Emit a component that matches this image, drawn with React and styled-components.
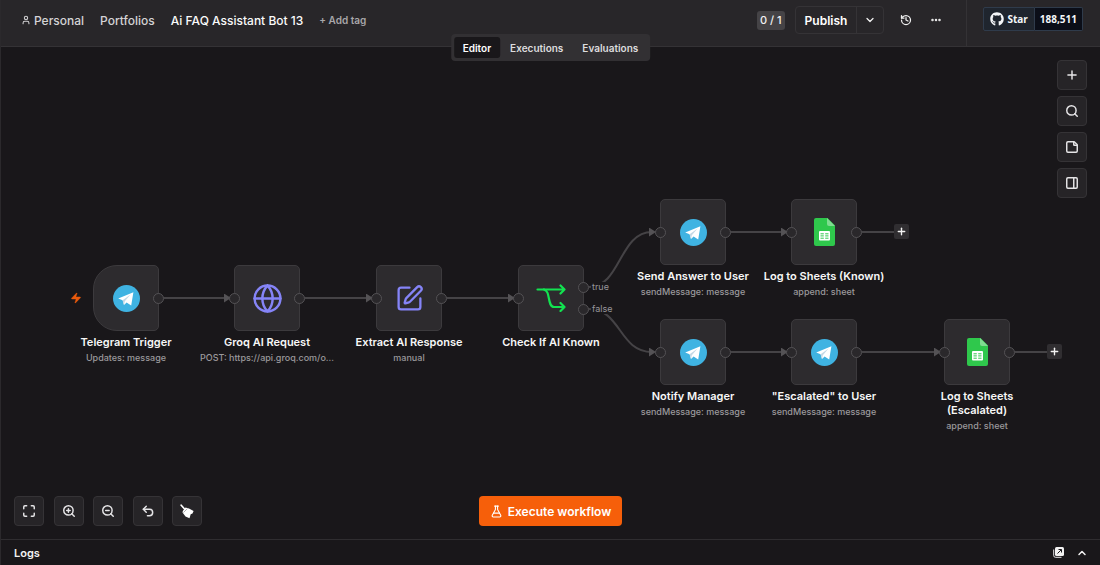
import React from "react";
import styled, { createGlobalStyle, css } from "styled-components";
import {
  ChevronDown,
  ChevronUp,
  Ellipsis,
  FlaskConical,
  Globe,
  History,
  Maximize,
  PanelRight,
  Plus,
  Search,
  SquarePen,
  StickyNote,
  Undo2,
  User,
  Zap,
  ZoomIn,
  ZoomOut,
} from "lucide-react";
import { FaGithub } from "react-icons/fa";

const GlobalStyle = createGlobalStyle`
  * {
    box-sizing: border-box;
  }

  body {
    margin: 0;
    background: #19171a;
    color: #f2f2f2;
    font-family: Inter, "Liberation Sans", sans-serif;
    font-size: 12px;
  }

  button {
    font-family: inherit;
    color: inherit;
    padding: 0;
    border: 0;
    background: none;
    cursor: pointer;
  }

  a {
    color: inherit;
    text-decoration: none;
  }

  svg {
    display: block;
    flex-shrink: 0;
  }
`;

const Page = styled.div`
  display: flex;
  flex-direction: column;
  min-height: 100vh;
  border-left: 1px solid #2b292c;
`;

const Header = styled.header`
  position: relative;
  display: flex;
  align-items: stretch;
  height: 47px;
  background: #282629;
  border-bottom: 1px solid #343235;
`;

const Breadcrumbs = styled.nav`
  display: flex;
  flex: 1;
  align-items: center;
  gap: 16px;
  padding: 0 0 6px 20px;
  font-weight: 500;
  color: #d4d3d5;
`;

const Crumb = styled.a`
  display: flex;
  align-items: center;
  gap: 3px;
`;

const Title = styled.h1`
  margin: 0;
  font-size: 12px;
  font-weight: 500;
  color: #fafafa;
`;

const AddTag = styled.button`
  font-size: 10px;
  font-weight: 600;
  color: #a8a7a9;
`;

const Actions = styled.div`
  display: flex;
  align-items: center;
  padding: 0 12px 6px 0;
`;

const Count = styled.span`
  padding: 0 3px;
  margin-right: 10px;
  border-radius: 3px;
  background: #454346;
  font-size: 11px;
  font-weight: 500;
  line-height: 19px;
`;

const PublishGroup = styled.div`
  display: flex;
  height: 28px;
  margin-right: 10px;
  border: 1px solid #353336;
  border-radius: 4px;
`;

const PublishButton = styled.button`
  padding: 0 9px;
  font-size: 12px;
  font-weight: 600;
  color: #fff;
`;

const PublishMore = styled.button`
  display: grid;
  place-items: center;
  width: 27px;
  border-left: 1px solid #353336;
`;

const HeaderIcon = styled.button`
  display: grid;
  place-items: center;
  width: 24px;
  height: 24px;
  margin-right: 6px;
`;

const GithubBox = styled.div`
  display: flex;
  align-items: center;
  padding: 0 17px 8px 16px;
  border-left: 1px solid #343235;
`;

const GithubButton = styled.a`
  display: flex;
  align-items: center;
  gap: 3px;
  height: 24px;
  padding: 0 ${(p) => (p.$count ? "5px" : "6px")};
  border: 1px solid #2f3b4b;
  border-radius: ${(p) => (p.$count ? "0 2px 2px 0" : "2px 0 0 2px")};
  border-left-width: ${(p) => (p.$count ? "0" : "1px")};
  background: ${(p) => (p.$count ? "#0b0e18" : "#1f252e")};
  font-family: "Open Sans", "Noto Sans", sans-serif;
  font-size: 10px;
  font-weight: 700;
  color: #f4f6f8;
`;

const Tabs = styled.div`
  position: absolute;
  top: 34px;
  left: 50%;
  z-index: 2;
  display: flex;
  gap: 1px;
  padding: 3px;
  border-radius: 4px;
  background: #323033;
  transform: translateX(-50%);
`;

const Tab = styled.button`
  height: 21px;
  padding: 0 9px;
  border-radius: 3px;
  background: ${(p) => (p.$active ? "#19171a" : "transparent")};
  font-size: 10px;
  font-weight: 600;
  color: ${(p) => (p.$active ? "#fff" : "#dddcde")};
`;

const Canvas = styled.main`
  position: relative;
  display: flex;
  flex: 1;
  flex-direction: column;
  align-items: stretch;
  justify-content: space-between;
  min-height: 440px;
  padding: 13px;
`;

const SideTools = styled.div`
  display: flex;
  flex-direction: column;
  align-self: flex-end;
  gap: 6px;
`;

const BottomBar = styled.div`
  display: grid;
  grid-template-columns: 1fr auto 1fr;
  align-items: center;
`;

const ZoomTools = styled.div`
  display: flex;
  justify-content: space-between;
  width: 188px;
`;

const ToolButton = styled.button`
  display: grid;
  place-items: center;
  width: 30px;
  height: 30px;
  border: 1px solid #353336;
  border-radius: 4px;
  background: #262427;
  color: #e6e5e7;
`;

const ExecuteButton = styled.button`
  display: flex;
  align-items: center;
  gap: 5px;
  height: 30px;
  padding: 0 11px;
  border-radius: 4px;
  background: #f65f0a;
  font-size: 12px;
  font-weight: 600;
  color: #fff;
`;

const Wires = styled.svg`
  position: absolute;
  top: 0;
  left: 0;
  width: 100%;
  height: 100%;
  pointer-events: none;
`;

const NodeRoot = styled.div`
  position: absolute;
  display: flex;
  flex-direction: column;
  align-items: center;
  width: 66px;
`;

const NodeBox = styled.div`
  position: relative;
  display: grid;
  place-items: center;
  width: 66px;
  height: 66px;
  border: 1px solid #3c3a3d;
  border-radius: ${(p) => (p.$trigger ? "24px 5px 5px 24px" : "5px")};
  background: #2d2b2e;
`;

const Bolt = styled.span`
  position: absolute;
  top: 26px;
  left: -24px;
`;

const Handle = styled.span`
  position: absolute;
  top: ${(p) => p.$top || 27}px;
  ${(p) =>
    p.$side === "in"
      ? css`
          left: -6px;
        `
      : css`
          right: -6px;
        `}
  width: 11px;
  height: 11px;
  border: 1px solid #545255;
  border-radius: 50%;
  background: #2a282b;
`;

const NodeLabel = styled.div`
  display: flex;
  flex-direction: column;
  align-items: center;
  gap: 3px;
  width: 134px;
  margin-top: 4px;
  text-align: center;
`;

const NodeName = styled.div`
  font-size: 11px;
  font-weight: 600;
  line-height: 14px;
  color: #f7f7f7;
`;

const NodeNote = styled.div`
  font-size: 9px;
  font-weight: 500;
  line-height: 12px;
  color: #9b999c;
  white-space: nowrap;
`;

const BranchLabel = styled.span`
  position: absolute;
  padding: 0 1px;
  background: #19171a;
  font-size: 9px;
  line-height: 10px;
  color: #98969a;
`;

const AddNode = styled.button`
  position: absolute;
  display: grid;
  place-items: center;
  width: 15px;
  height: 15px;
  border-radius: 2px;
  background: #302e31;
`;

const LogsBar = styled.footer`
  display: flex;
  align-items: center;
  justify-content: space-between;
  height: 26px;
  padding: 0 12px 0 13px;
  border-top: 1px solid #2f2d30;
`;

const LogsTitle = styled.h2`
  margin: 0;
  font-size: 11px;
  font-weight: 600;
`;

const LogsActions = styled.div`
  display: flex;
  align-items: center;
  gap: 12px;
`;

function TelegramIcon() {
  return (
    <svg width="27" height="27" viewBox="0 0 27 27">
      <circle cx="13.5" cy="13.5" r="13.5" fill="#3fb3e2" />
      <path d="M5.2 13.4 20.4 7.2 18.200 20.600 13.600 17.400 11 20 9.600 15.200z" fill="#fff" />
      <path d="M9.600 15.200 17.600 9.600 11.800 16.200 11 20z" fill="#c5d9e6" />
    </svg>
  );
}

function SheetsIcon() {
  return (
    <svg width="21" height="28" viewBox="0 0 21 28">
      <path
        d="M2 0h11.500L21 7.500V26a2 2 0 0 1-2 2H2a2 2 0 0 1-2-2V2a2 2 0 0 1 2-2z"
        fill="#2fc84c"
      />
      <path d="M13 0 21 8h-6a2 2 0 0 1-2-2z" fill="#7fdc90" />
      <rect x="5" y="13" width="11" height="9.500" rx="1" fill="#fff" />
      <path
        d="M6.500 15.800h3.300M11.200 15.800h3.300M6.500 17.900h3.300M11.200 17.900h3.300M6.500 20.200h3.300M11.200 20.200h3.300"
        stroke="#2fc84c"
        strokeWidth="1"
      />
    </svg>
  );
}

function BranchIcon() {
  return (
    <svg
      width="30"
      height="28"
      viewBox="0 0 30 28"
      fill="none"
      stroke="#12e350"
      strokeWidth="2.200"
      strokeLinecap="round"
      strokeLinejoin="round"
    >
      <path d="M1.500 5.500h27M24.500 1.500l4 4-4 4" />
      <path d="M8 5.500c3.500 1.500 4 4 4.800 8.500s1.700 9 5.200 9h10.500M24.500 19l4 4-4 4" />
    </svg>
  );
}

function BroomIcon() {
  return (
    <svg width="14" height="15" viewBox="0 0 14 15" fill="#fff">
      <path d="M1.200 1.200 4.800 5.200" stroke="#fff" strokeWidth="1.700" strokeLinecap="round" />
      <path d="M5.500 3.500 9 4.500 13.600 7 12.500 9.600 10.700 10.300 9.500 14.300 5.500 12.500 2.500 8.500 2.800 7z" />
      <path d="M3.400 8.600 7.400 4.600" stroke="#777579" strokeWidth=".6" />
    </svg>
  );
}

function PopOutIcon() {
  return (
    <svg width="11" height="11" viewBox="0 0 11 11" fill="none">
      <path d="M.7 2.500v6A1.800 1.800 0 0 0 2.500 10.300h6" stroke="#e6e5e7" />
      <rect x="2" y="0" width="9" height="9" rx="1.500" fill="#f2f2f2" />
      <path d="M4.500 6.500 8.300 2.700M5.500 2.500h3v3" stroke="#19171a" />
    </svg>
  );
}

const icons = {
  telegram: <TelegramIcon />,
  sheets: <SheetsIcon />,
  branch: <BranchIcon />,
  globe: <Globe size={31} strokeWidth={1.9} color="#8584f7" />,
  pen: <SquarePen size={29} strokeWidth={1.9} color="#8584f7" />,
};

// positions are in canvas coordinates
const nodes = [
  { x: 92, y: 218, icon: "telegram", name: "Telegram Trigger", note: "Updates: message", trigger: true },
  { x: 233, y: 218, icon: "globe", name: "Groq AI Request", note: "POST: https://api.groq.com/o..." },
  { x: 375, y: 218, icon: "pen", name: "Extract AI Response", note: "manual" },
  { x: 517, y: 218, icon: "branch", name: "Check If AI Known", outputs: [16, 38] },
  { x: 659, y: 152, icon: "telegram", name: "Send Answer to User", note: "sendMessage: message" },
  { x: 790, y: 152, icon: "sheets", name: "Log to Sheets (Known)", note: "append: sheet" },
  { x: 659, y: 272, icon: "telegram", name: "Notify Manager", note: "sendMessage: message" },
  { x: 790, y: 272, icon: "telegram", name: '"Escalated" to User', note: "sendMessage: message" },
  { x: 943, y: 272, icon: "sheets", name: "Log to Sheets (Escalated)", note: "append: sheet" },
];

const wires = [
  "M163 251H226",
  "M304 251H368",
  "M446 251H510",
  "M588 240C620 240 618 185 651 185",
  "M588 262C620 262 618 305 651 305",
  "M730 185H783",
  "M730 305H783",
  "M861 305H936",
];

const stubs = [
  { x: 893, y: 177, wire: "M861 185H893" },
  { x: 1046, y: 297, wire: "M1014 305H1046" },
];

function Node({ x, y, icon, name, note, trigger, outputs = [27] }) {
  return (
    <NodeRoot style={{ left: x, top: y }}>
      <NodeBox $trigger={trigger}>
        {trigger ? (
          <Bolt>
            <Zap size={12} fill="#ea5a0c" color="#ea5a0c" strokeWidth={1} />
          </Bolt>
        ) : (
          <Handle $side="in" />
        )}
        {icons[icon]}
        {outputs.map((top) => (
          <Handle key={top} $side="out" $top={top} />
        ))}
      </NodeBox>
      <NodeLabel>
        <NodeName>{name}</NodeName>
        {note && <NodeNote>{note}</NodeNote>}
      </NodeLabel>
    </NodeRoot>
  );
}

export default function App() {
  return (
    <Page>
      <GlobalStyle />
      <Header>
        <Breadcrumbs>
          <Crumb href="#personal">
            <User size={10} strokeWidth={2.5} />
            Personal
          </Crumb>
          <Crumb href="#portfolios">Portfolios</Crumb>
          <Title>Ai FAQ Assistant Bot 13</Title>
          <AddTag>+ Add tag</AddTag>
        </Breadcrumbs>
        <Actions>
          <Count>0 / 1</Count>
          <PublishGroup>
            <PublishButton>Publish</PublishButton>
            <PublishMore aria-label="Publish options">
              <ChevronDown size={12} strokeWidth={2.5} />
            </PublishMore>
          </PublishGroup>
          <HeaderIcon aria-label="History">
            <History size={12} strokeWidth={2.5} />
          </HeaderIcon>
          <HeaderIcon aria-label="More">
            <Ellipsis size={12} strokeWidth={3} />
          </HeaderIcon>
        </Actions>
        <GithubBox>
          <GithubButton href="#star">
            <FaGithub size={14} />
            Star
          </GithubButton>
          <GithubButton href="#stargazers" $count>
            188,511
          </GithubButton>
        </GithubBox>
        <Tabs role="tablist">
          <Tab role="tab" $active>
            Editor
          </Tab>
          <Tab role="tab">Executions</Tab>
          <Tab role="tab">Evaluations</Tab>
        </Tabs>
      </Header>

      <Canvas>
        <Wires fill="none" stroke="#454346" strokeWidth="2">
          <defs>
            <marker
              id="arrow"
              viewBox="0 0 7 9"
              refX="3"
              refY="4.5"
              markerWidth="7"
              markerHeight="9"
              markerUnits="userSpaceOnUse"
            >
              <path d="M0 0 7 4.500 0 9z" fill="#545255" stroke="none" />
            </marker>
          </defs>
          {wires.map((d) => (
            <path key={d} d={d} markerEnd="url(#arrow)" />
          ))}
          {stubs.map((stub) => (
            <path key={stub.wire} d={stub.wire} />
          ))}
        </Wires>
        {nodes.map((node) => (
          <Node key={node.name} {...node} />
        ))}
        <BranchLabel style={{ left: 590, top: 235 }}>true</BranchLabel>
        <BranchLabel style={{ left: 590, top: 257 }}>false</BranchLabel>
        {stubs.map((stub) => (
          <AddNode key={stub.x} aria-label="Add node" style={{ left: stub.x, top: stub.y }}>
            <Plus size={11} strokeWidth={3} />
          </AddNode>
        ))}

        <SideTools>
          <ToolButton aria-label="Add">
            <Plus size={14} strokeWidth={2.5} />
          </ToolButton>
          <ToolButton aria-label="Search">
            <Search size={14} strokeWidth={2.5} />
          </ToolButton>
          <ToolButton aria-label="Sticky note">
            <StickyNote size={14} strokeWidth={2.5} />
          </ToolButton>
          <ToolButton aria-label="Side panel">
            <PanelRight size={14} strokeWidth={2.5} />
          </ToolButton>
        </SideTools>

        <BottomBar>
          <ZoomTools>
            <ToolButton aria-label="Fit view">
              <Maximize size={14} strokeWidth={2.5} />
            </ToolButton>
            <ToolButton aria-label="Zoom in">
              <ZoomIn size={14} strokeWidth={2.5} />
            </ToolButton>
            <ToolButton aria-label="Zoom out">
              <ZoomOut size={14} strokeWidth={2.5} />
            </ToolButton>
            <ToolButton aria-label="Undo">
              <Undo2 size={14} strokeWidth={2.5} />
            </ToolButton>
            <ToolButton aria-label="Tidy up">
              <BroomIcon />
            </ToolButton>
          </ZoomTools>
          <ExecuteButton>
            <FlaskConical size={13} />
            Execute workflow
          </ExecuteButton>
        </BottomBar>
      </Canvas>

      <LogsBar>
        <LogsTitle>Logs</LogsTitle>
        <LogsActions>
          <button aria-label="Pop out">
            <PopOutIcon />
          </button>
          <button aria-label="Open logs">
            <ChevronUp size={12} strokeWidth={3} />
          </button>
        </LogsActions>
      </LogsBar>
    </Page>
  );
}
